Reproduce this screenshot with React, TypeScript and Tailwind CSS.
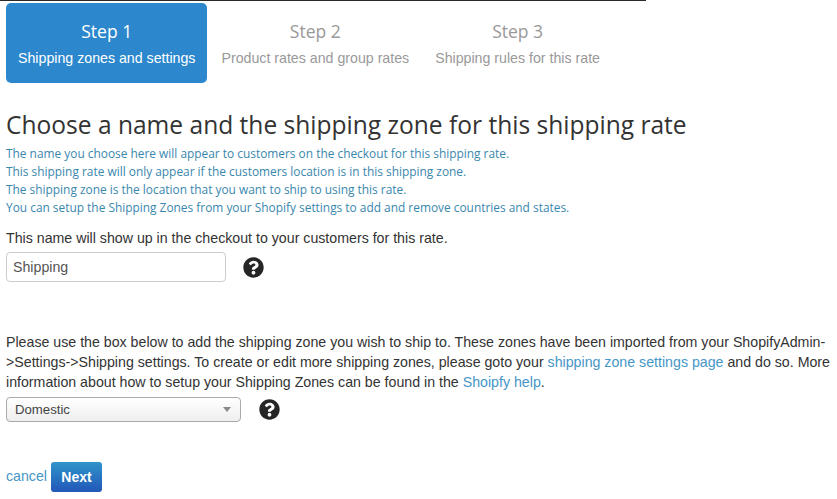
import { FaQuestionCircle } from "react-icons/fa";

const sans = "font-['Liberation_Sans',Arial,sans-serif]";
const open = "font-['Open_Sans',sans-serif]";

function Step({ n, label, active }: { n: string; label: string; active?: boolean }) {
  return (
    <div className={`h-20 rounded-[5px] px-3 pt-[14px] text-center ${active ? "bg-[#2c87cd] text-white" : "text-[#999999]"}`}>
      <div className={`${open} text-[17.5px] leading-[28px]`}>{n}</div>
      <div className={`${sans} mt-[1px] text-[14.2px] leading-[25px]`}>{label}</div>
    </div>
  );
}

function Help() {
  return <FaQuestionCircle className="text-[21px] text-[#262626]" />;
}

export default function App() {
  return (
    <div className={`${sans} h-[499px] w-[837px] overflow-hidden bg-white text-[#333333]`}>
      <div className="h-px w-[646px] bg-[#2a2a2a]" />
      <div className="mt-[2px] flex gap-[2px] pl-[6px]">
        <Step n="Step 1" label="Shipping zones and settings" active />
        <Step n="Step 2" label="Product rates and group rates" />
        <Step n="Step 3" label="Shipping rules for this rate" />
      </div>
      <div className="pl-[6px]">
        <h1 className={`${open} mt-[24px] text-[24.55px] leading-[36px] text-[#333333]`}>
          Choose a name and the shipping zone for this shipping rate
        </h1>
        <div className={`${open} mt-[1px] text-[11.9px] leading-[18px] text-[#3a87ad]`}>
          <p>The name you choose here will appear to customers on the checkout for this shipping rate.</p>
          <p>This shipping rate will only appear if the customers location is in this shipping zone.</p>
          <p>The shipping zone is the location that you want to ship to using this rate.</p>
          <p>You can setup the Shipping Zones from your Shopify settings to add and remove countries and states.</p>
        </div>
        <p className="mt-[12px] text-[14.2px] leading-[20px]">This name will show up in the checkout to your customers for this rate.</p>
        <div className="mt-[4px] flex items-center gap-[17px]">
          <div className="flex h-[30px] w-[220px] items-center rounded-[4px] border border-[#cccccc] px-[6px] pt-[1px] text-[14.2px] text-[#555555]">
            Shipping
          </div>
          <Help />
        </div>
        <p className="mt-[50px] w-[828px] text-[14.2px] leading-[20px]">
          Please use the box below to add the shipping zone you wish to ship to. These zones have been imported from your ShopifyAdmin-&gt;Settings-&gt;Shipping settings. To create or edit more shipping zones, please goto your{" "}
          <a className="text-[#4596c8]">shipping zone settings page</a> and do so. More information about how to setup your Shipping Zones can be found in the{" "}
          <a className="text-[#4596c8]">Shoipfy help</a>.
        </p>
        <div className="mt-[5px] flex items-center gap-[18px]">
          <div className="flex h-[25px] w-[235px] items-center justify-between rounded-[4px] border border-[#aaaaaa] bg-gradient-to-b from-white to-[#eeeeee] pl-[8px] pr-[9px] text-[13.2px] text-[#444444]">
            Domestic
            <span className="h-0 w-0 border-x-[4px] border-t-[5px] border-x-transparent border-t-[#888888]" />
          </div>
          <Help />
        </div>
        <div className="mt-[40px] flex items-center gap-[4px]">
          <a className="text-[14.2px] text-[#4596c8]">cancel</a>
          <button className="h-[30px] w-[51px] rounded-[3px] bg-gradient-to-b from-[#3294c9] to-[#2356b8] text-[14px] font-bold text-white">
            Next
          </button>
        </div>
      </div>
    </div>
  );
}
